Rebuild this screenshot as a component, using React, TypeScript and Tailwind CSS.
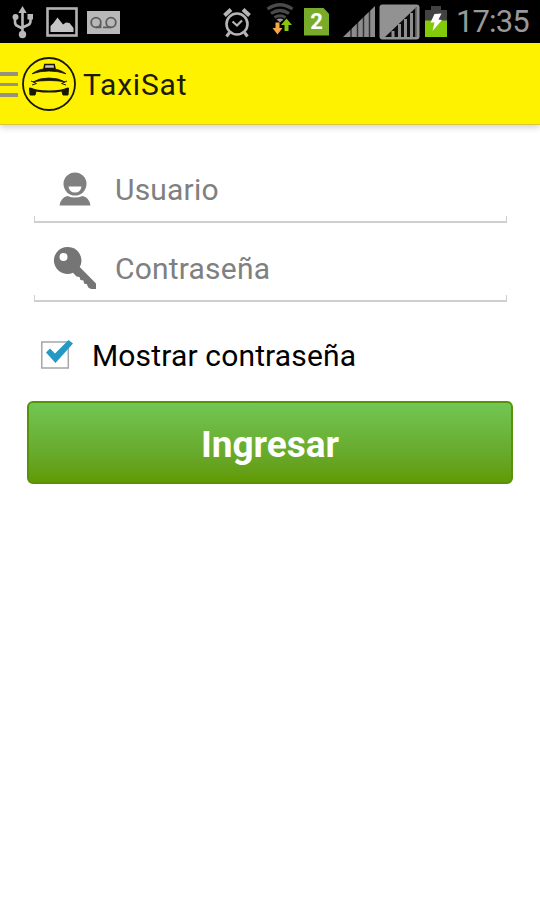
import type { ReactNode } from 'react'

function UsbIcon() {
  return (
    <svg width="22" height="34" viewBox="0 0 22 34" fill="none" stroke="#b9b9b9" strokeWidth="2.6">
      <path d="M10.5 6v24M3 12v5q0 3 2.500 4l5 2.500M18.500 12v4q0 3-2.500 4l-5.500 2.500" />
      <path d="M10.500 1l4.200 7H6.300z" fill="#b9b9b9" stroke="none" />
      <circle cx="3.500" cy="12" r="3" fill="#b9b9b9" stroke="none" />
      <path d="M15.500 9h5.500v5.500h-5.500z" fill="#b9b9b9" stroke="none" />
      <circle cx="10.500" cy="29.500" r="3.700" fill="#b9b9b9" stroke="none" />
    </svg>
  )
}

function PictureIcon() {
  return (
    <svg width="32" height="30" viewBox="0 0 32 30">
      <rect x="1.500" y="1.500" width="29" height="27" fill="none" stroke="#b3b3b3" strokeWidth="2.600" />
      <path d="M4.500 25v-6l3-3 4-5.500 5.500 7 3-2 3.500.5 4 5V25z" fill="#c4c4c4" />
    </svg>
  )
}

function VoicemailIcon() {
  return (
    <svg width="33" height="23" viewBox="0 0 33 23">
      <rect width="33" height="23" fill="#b8b8b8" />
      <g fill="none" stroke="#5c5c5c" strokeWidth="1.800">
        <circle cx="9" cy="11.500" r="4.800" />
        <circle cx="24" cy="11.500" r="4.800" />
        <path d="M9 16.300h4.500v-3M24 16.300h-8" />
      </g>
    </svg>
  )
}

function AlarmIcon() {
  return (
    <svg width="28" height="30" viewBox="0 0 28 30" fill="none" stroke="#b5b5b5">
      <circle cx="14" cy="16" r="10.500" strokeWidth="2.600" />
      <path d="M9.500 13.500l4.500 4 5-5" strokeWidth="2.200" />
      <path d="M1.500 7.500l6.500-6M26.500 7.500l-6.500-6" strokeWidth="4" />
      <path d="M6.500 24.500L3.500 28.500M21.500 24.500l3 4" strokeWidth="3" />
    </svg>
  )
}

function WifiIcon() {
  return (
    <svg width="30" height="33" viewBox="0 0 30 33">
      <g fill="none" stroke="#4a4a4a" strokeWidth="3.200">
        <path d="M1.500 6q12.500-8.500 25 0" />
        <path d="M5 10.500q9-6 18 0" />
        <path d="M8.500 14.500q5.500-3.500 11 0" />
      </g>
      <path d="M14 19.500l-3.500-3q3.500-2.200 7 0z" fill="#999" />
      <path d="M9.500 19.500h4v5.500h3l-5 6.500-5-6.500h3z" fill="#f8a54a" />
      <path d="M18.500 28v-6h-3.500l5.500-6.500 5.500 6.500h-3.500v6z" fill="#86c50c" />
    </svg>
  )
}

function SignalIcon() {
  return (
    <svg width="32" height="31" viewBox="0 0 32 31">
      <path d="M0 31L32 0v31z" fill="#8c8c8c" />
      <path d="M8 20v11M14.500 14v17M20.500 8v23M26.500 3v28" stroke="#000" strokeWidth="1.500" opacity=".65" />
    </svg>
  )
}

function SignalBoxedIcon() {
  return (
    <svg width="41" height="36" viewBox="0 0 41 36">
      <rect x=".5" y=".5" width="40" height="35" rx="3" fill="#929292" />
      <path d="M6 33L37.500 3v30z" fill="#0b0b0b" />
      <path d="M14 27v6M20.500 20v13M26.500 15v18M32.500 9v24" stroke="#8e8e8e" strokeWidth="3" />
      <path d="M37 4v29" stroke="#777" strokeWidth="1.500" />
    </svg>
  )
}

function BatteryIcon() {
  return (
    <svg width="22" height="31" viewBox="0 0 22 31">
      <path d="M6 0h10v4h6v27H0V4h6z" fill="#424242" />
      <path d="M0 14.500h22V31H0z" fill="#83cb0a" />
      <path d="M9.500 8l7-.5-3 6 3.500.5-9.500 11 2-8.500H5.500z" fill="#fff" />
    </svg>
  )
}

function StatusBar() {
  return (
    <div className="flex h-[43px] items-center bg-black pl-3">
      <UsbIcon />
      <span className="ml-3"><PictureIcon /></span>
      <span className="mt-0.5 ml-[9px]"><VoicemailIcon /></span>
      <span className="mt-0.5 ml-[103px]"><AlarmIcon /></span>
      <span className="-mt-1 ml-[15px]"><WifiIcon /></span>
      <div className="ml-2 flex h-[28px] w-[25px] items-center justify-center bg-[#79ab2b] text-[22px] leading-none font-bold text-white [clip-path:polygon(0_0,76%_0,100%_22%,100%_100%,0_100%)]">
        2
      </div>
      <span className="ml-[14px]"><SignalIcon /></span>
      <span className="ml-[4px]"><SignalBoxedIcon /></span>
      <span className="ml-[5px]"><BatteryIcon /></span>
      <span className="ml-[9px] text-[31px] leading-none tracking-[-0.9px] text-[#999]">17:35</span>
    </div>
  )
}

function TaxiLogo() {
  return (
    <svg width="56" height="56" viewBox="0 0 56 56" fill="none" stroke="#171700">
      <circle cx="28" cy="28" r="26" strokeWidth="1.800" />
      <path d="M23 12.500l.8-4h9.400l.8 4z" fill="#c4c4c4" strokeWidth="1.500" />
      <path d="M11 17.800Q18 12.500 28 12.500t17 5.300Q37 15 28 15t-17 2.800z" fill="#171700" strokeWidth=".8" />
      <path d="M12 26Q18 22 28 22t16 4Q38 24.500 28 24.500T12 26z" fill="#171700" strokeWidth=".8" />
      <path d="M10 25l5.500 2.500-4.500 1.500M46 25l-5.500 2.500 4.500 1.500" strokeWidth="1" />
      <path d="M9 32.500Q15 35.500 28 35.500t19-3" strokeWidth="2.200" />
      <path d="M8.500 32l5 2 1.500 1.500-1 3.500H9zM47.500 32l-5 2-1.500 1.500 1 3.500h5z" fill="#171700" strokeWidth="1" />
    </svg>
  )
}

function UserIcon() {
  return (
    <svg width="32" height="34" viewBox="0 0 32 34">
      <circle cx="16" cy="12" r="11.500" fill="#808080" />
      <path d="M9.500 14.500h13q-.8 6-6.500 6t-6.500-6z" fill="#fff" />
      <path d="M.5 33.500q1.500-8.500 8-9.500 7.500 3 15 0 6.500 1 8 9.500z" fill="#808080" />
    </svg>
  )
}

function KeyIcon() {
  return (
    <svg width="44" height="44" viewBox="0 0 44 44">
      <path
        d="M14.500 1a13.500 13.500 0 1 0 5.500 25.800l3.500 3.700 3 .5 1 3 3 .5.500 3 3 .7 1 3L38 43h5v-5.500L26.700 21A13.500 13.500 0 0 0 14.500 1z"
        fill="#757575"
      />
      <circle cx="10.500" cy="11" r="4" fill="#fff" />
    </svg>
  )
}

function Field({ icon, label }: { icon: ReactNode; label: string }) {
  return (
    <div className="relative flex h-[79px] items-center pt-3">
      <span className="-mt-0.5 flex w-[81px] items-center justify-center">{icon}</span>
      <span className="mt-px text-[30px] leading-none tracking-[0.2px] text-[#808080]">{label}</span>
      {/* holo style underline with short upturned ends */}
      <div className="absolute inset-x-0 bottom-0 h-[7px] border-x-[1.500px] border-b-2 border-[#cfcfcf]" />
    </div>
  )
}

export default function App() {
  return (
    <div className="h-[900px] w-[540px] overflow-hidden bg-white font-[Roboto,'Liberation_Sans',sans-serif]">
      <StatusBar />

      <header className="flex h-[82px] items-center border-b border-[#d9c83d] bg-[#fff200] shadow-[0_2px_7px_rgba(0,0,0,0.2)]">
        <div className="mt-0.5 flex w-[18px] flex-col gap-[7px]">
          <div className="h-[3.500px] bg-[#979280]" />
          <div className="h-[3.500px] bg-[#979280]" />
          <div className="h-[3.500px] bg-[#979280]" />
        </div>
        <span className="ml-[3px]"><TaxiLogo /></span>
        <h1 className="mt-0.5 ml-1.5 text-[30px] leading-none tracking-[0.8px] text-[#1c1b00]">TaxiSat</h1>
      </header>

      <main className="pt-[19px]">
        <div className="mr-[33px] ml-[34px]">
          <Field icon={<UserIcon />} label="Usuario" />
          <Field icon={<KeyIcon />} label="Contraseña" />
        </div>

        <label className="mt-[38px] ml-[41px] flex h-[30px] items-center">
          <svg width="34" height="30" viewBox="0 0 34 30" fill="none">
            <rect x=".8" y="2" width="26.500" height="26" stroke="#a6a6a6" strokeWidth="1.500" />
            <path d="M5 12.500l4-4 5 5L27.500 0 32 3.500 14.500 23z" fill="#2399c4" />
          </svg>
          <span className="mt-0.5 ml-[17px] text-[30px] leading-none tracking-[0.15px] text-black">
            Mostrar contraseña
          </span>
        </label>

        <button className="mt-[31px] ml-[27px] flex h-[83px] w-[486px] items-center justify-center rounded-md border-2 border-[#579208] bg-linear-to-b from-[#72c653] to-[#629a00] pt-1 text-[37px] font-bold text-white">
          Ingresar
        </button>
      </main>
    </div>
  )
}
